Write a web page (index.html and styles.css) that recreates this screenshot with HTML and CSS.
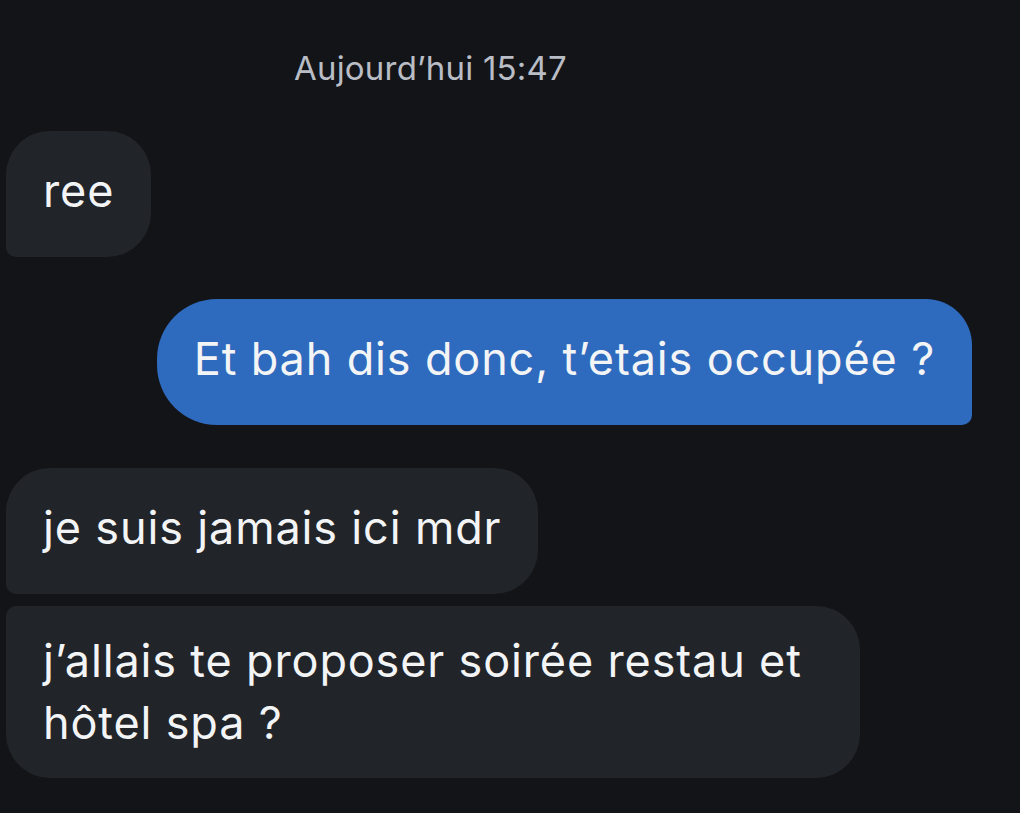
FILE: index.html
```html
<!DOCTYPE html>
<html lang="fr">
<head>
<meta charset="utf-8">
<link rel="stylesheet" href="styles.css">
</head>
<body>
<main class="chat">
  <div class="stamp">Aujourd’hui 15:47</div>
  <div class="bubble in single">ree</div>
  <div class="bubble out">Et bah dis donc, t’etais occupée ?</div>
  <div class="group">
    <div class="bubble in first">je suis jamais ici mdr</div>
    <div class="bubble in last multi">j’allais te proposer soirée restau et hôtel spa ?</div>
  </div>
</main>
</body>
</html>
```
FILE: styles.css
```css
html, body {
  margin: 0;
  padding: 0;
  background: #131418;
  height: 100%;
}
.chat {
  display: flex;
  flex-direction: column;
  align-items: flex-start;
  padding: 48px 48px 0 6px;
  font-family: Inter, "Open Sans", sans-serif;
  color: #f3f4f6;
}
.stamp {
  align-self: flex-start;
  margin-left: 288px;
  font-size: 33px;
  letter-spacing: 0.2px;
  line-height: 40px;
  color: #b9bdc5;
  margin-bottom: 43px;
}
.bubble {
  box-sizing: border-box;
  max-width: 854px;
  padding: 29px 37px 35px;
  font-size: 45px;
  letter-spacing: 0.85px;
  line-height: 62px;
  background: #212429;
  border-radius: 44px;
}
.bubble.multi {
  padding: 24px 37px 24px;
}
.bubble.single {
  border-bottom-left-radius: 10px;
}
.bubble.out {
  align-self: flex-end;
  margin-top: 42px;
  background: #2e6abd;
  border-radius: 60px 46px 10px 60px;
}
.group {
  display: flex;
  flex-direction: column;
  align-items: flex-start;
  gap: 12px;
  margin-top: 43px;
}
.bubble.first {
  border-bottom-left-radius: 10px;
}
.bubble.last {
  border-top-left-radius: 10px;
}
```
